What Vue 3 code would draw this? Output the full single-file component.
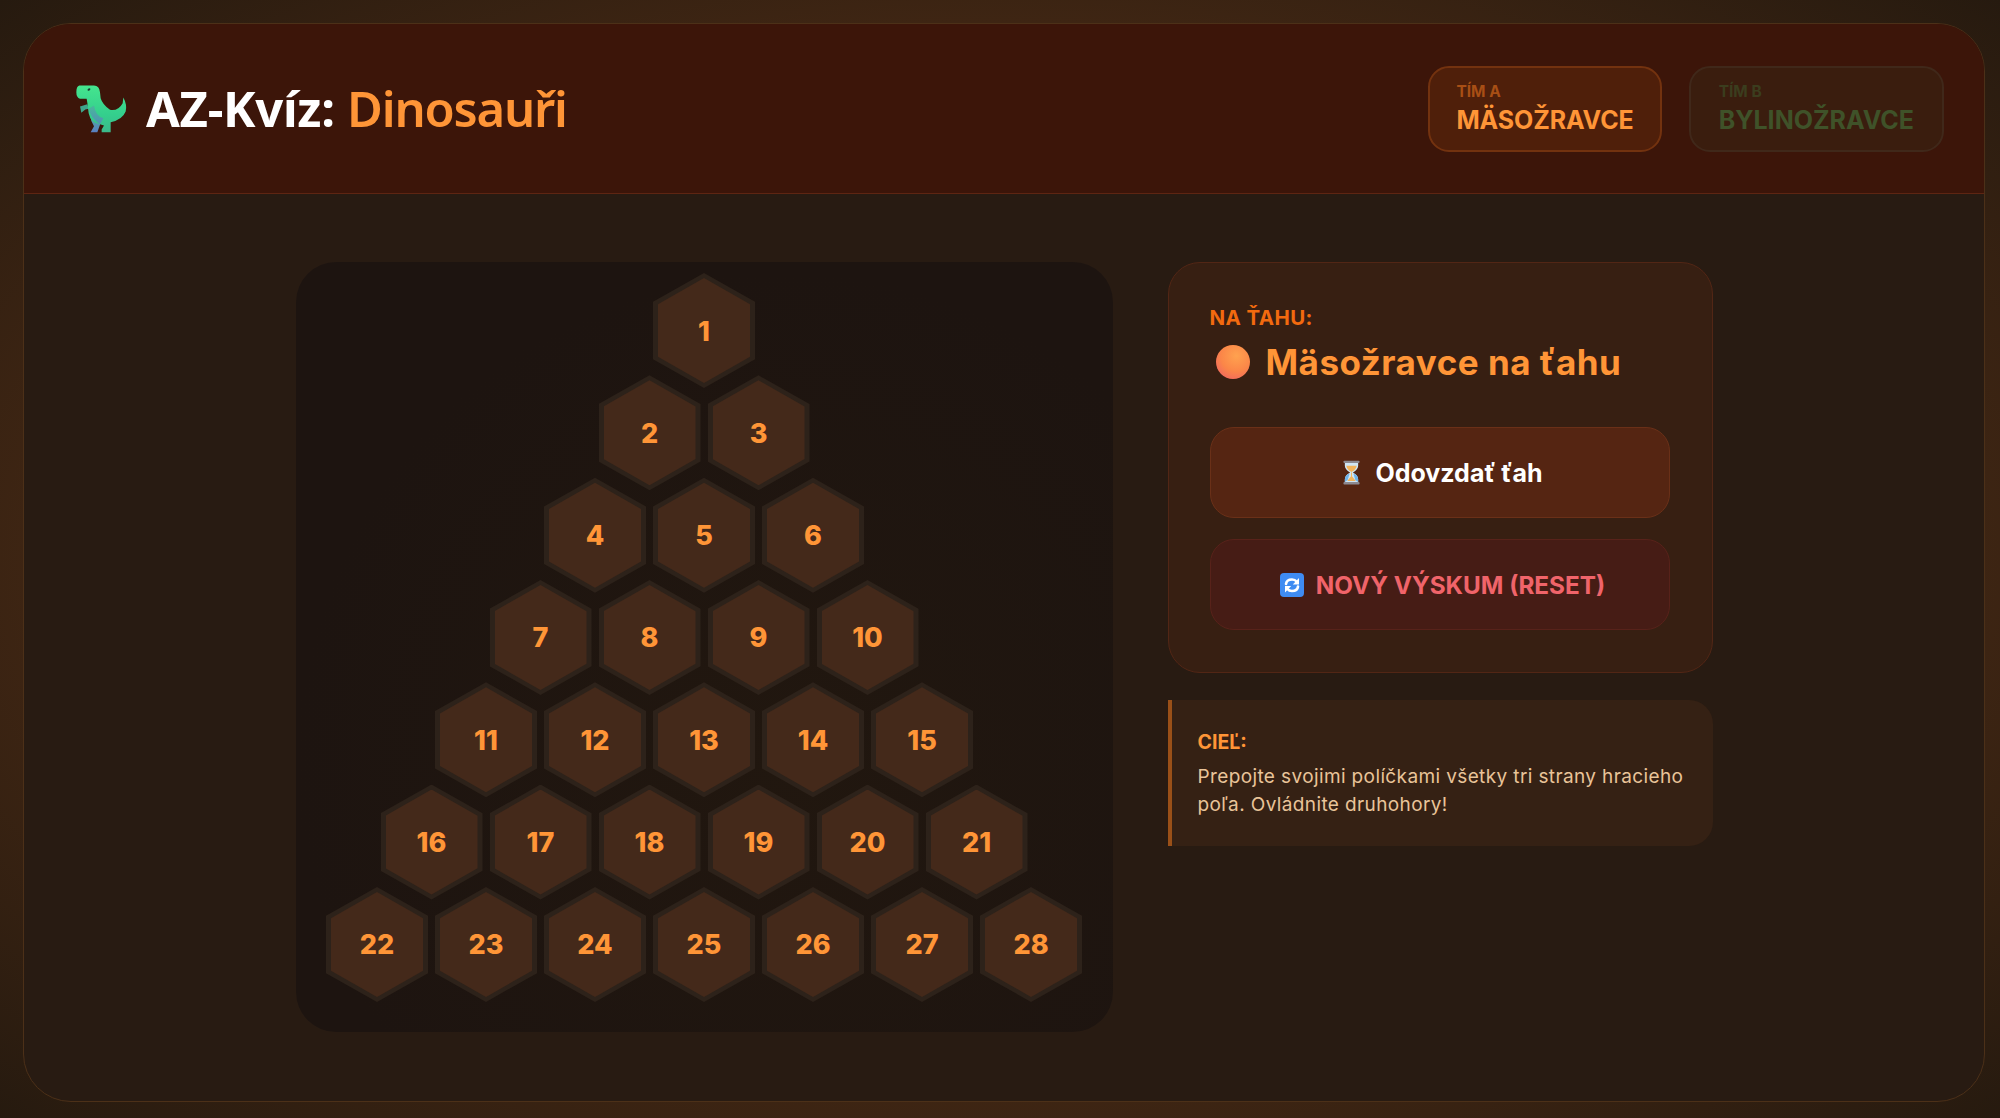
<script setup>
const rows = [[1],[2,3],[4,5,6],[7,8,9,10],[11,12,13,14,15],[16,17,18,19,20,21],[22,23,24,25,26,27,28]]
</script>

<template>
  <div class="page">
    <div class="frame">
      <header class="head">
        <div class="brand">
          <svg class="dino" viewBox="40 45 165 155" aria-hidden="true">
            <defs>
              <linearGradient id="dg" x1="0" y1="0" x2="0" y2="1">
                <stop offset="0" stop-color="#45e58e"/>
                <stop offset=".62" stop-color="#34cf8d"/>
                <stop offset="1" stop-color="#3bb98a"/>
              </linearGradient>
              <linearGradient id="db" x1="0" y1="0" x2="0" y2="1">
                <stop offset="0" stop-color="#4fae9e"/>
                <stop offset="1" stop-color="#5a7fc2"/>
              </linearGradient>
            </defs>
            <path fill="url(#db)" d="M88 140 L122 150 L118 170 L110 192 H90 L100 174 Q90 160 88 140Z"/>
            <path fill="#3fa58c" d="M58 115 L80 108 L84 122 L74 124 L62 134Z"/>
            <path fill="url(#dg)" d="M56 52 H100 Q116 52 118 72 L120 90 Q125 108 148 125 Q172 130 186 105 L188 88 Q200 110 195 130 Q185 155 150 162 L150 192 H123 V184 L130 172 L118 168 Q90 165 84 135 L80 104 L78 92 H58 Q47 88 47 72 Q47 54 56 52Z"/>
            <path fill="url(#db)" opacity=".75" d="M84 122 Q90 150 118 168 L128 150 Q105 145 100 112Z"/>
            <ellipse cx="85" cy="64" rx="4.5" ry="3" fill="#1e3d33" transform="rotate(-25 85 64)"/>
          </svg>
          <h1 class="title">AZ-Kvíz: <span class="accent">Dinosauři</span></h1>
        </div>
        <div class="teams">
          <div class="chip chip-a">
            <div class="chip-label">TÍM A</div>
            <div class="chip-name">MÄSOŽRAVCE</div>
          </div>
          <div class="chip chip-b">
            <div class="chip-label">TÍM B</div>
            <div class="chip-name">BYLINOŽRAVCE</div>
          </div>
        </div>
      </header>

      <main class="main">
        <section class="board">
          <div v-for="(row, i) in rows" :key="i" class="row">
            <div v-for="n in row" :key="n" class="hex">
              <div class="hex-in">{{ n }}</div>
            </div>
          </div>
        </section>

        <aside class="side">
          <div class="card">
            <div class="turn-label">NA ŤAHU:</div>
            <div class="turn">
              <span class="dot"></span>
              <span class="turn-text">Mäsožravce na ťahu</span>
            </div>
            <button class="btn btn-pass">
              <svg class="ico-glass" viewBox="0 0 20 26" aria-hidden="true">
                <path fill="#cfe6f5" d="M3 3 H17 V6 Q17 10 11.5 13 Q17 16 17 20 V23 H3 V20 Q3 16 8.500 13 Q3 10 3 6Z"/>
                <path fill="#f2b45c" d="M4.500 6 H15.500 Q15 10 10 12.500 Q5 10 4.500 6Z"/>
                <path fill="#f2b45c" d="M9.500 13 H10.500 V17 L14.500 22 H5.500 L9.500 17Z"/>
                <path fill="#6fb4ea" d="M3 20 Q3 16 8 14 L6 21 L3 23Z M17 20 Q17 16 12 14 L14 21 L17 23Z"/>
                <rect x="1.500" y="0.500" width="17" height="2.500" rx="1" fill="#8d8a90"/>
                <rect x="1.500" y="23" width="17" height="2.500" rx="1" fill="#8d8a90"/>
              </svg>
              <span>Odovzdať ťah</span>
            </button>
            <button class="btn btn-reset">
              <svg class="ico-sync" viewBox="0 0 24 24" aria-hidden="true">
                <rect width="24" height="24" rx="4" fill="#3f8cf2"/>
                <path fill="none" stroke="#fff" stroke-width="2.600" stroke-linecap="round" d="M6 11 Q6.500 6.500 12 6.500 Q15 6.500 16.500 8.500"/>
                <path fill="#fff" d="M19 5 V11.500 H12.800Z"/>
                <path fill="none" stroke="#fff" stroke-width="2.600" stroke-linecap="round" d="M18 13.500 Q17.500 18 12 18 Q9 18 7.500 16"/>
                <path fill="#fff" d="M5 19.500 V13 H11.200Z"/>
              </svg>
              <span>NOVÝ VÝSKUM (RESET)</span>
            </button>
          </div>
          <div class="goal">
            <div class="goal-title">CIEĽ:</div>
            <p class="goal-text">Prepojte svojimi políčkami všetky tri strany hracieho poľa. Ovládnite druhohory!</p>
          </div>
        </aside>
      </main>
    </div>
  </div>
</template>

<style>
html, body { margin: 0; background: #2a1b10; }
</style>

<style scoped>
.page {
  box-sizing: border-box;
  width: 2000px;
  height: 1118px;
  padding: 23px 15px 16px 23px;
  background: radial-gradient(ellipse at 50% 50%, #3e2513 68%, #261a0f 100%);
  font-family: Inter, "Noto Sans", sans-serif;
  overflow: hidden;
}
.frame {
  box-sizing: border-box;
  height: 100%;
  border: 1px solid #4c3018;
  border-radius: 48px;
  background: #281b12;
  overflow: hidden;
  display: flex;
  flex-direction: column;
}
.head {
  box-sizing: border-box;
  height: 170px;
  flex: none;
  background: #3c1509;
  border-bottom: 1px solid #5e2512;
  display: flex;
  align-items: center;
  justify-content: space-between;
  padding: 0 40px 0 50px;
}
.brand { display: flex; align-items: center; gap: 17px; }
.dino { width: 55px; height: 52px; flex: none; }
.title {
  margin: 0 0 2px;
  font-family: "Noto Sans", sans-serif;
  font-weight: 700;
  font-size: 49px;
  letter-spacing: -0.3px;
  color: #fff;
  white-space: pre;
}
.accent { color: #ff9537; font-weight: 600; letter-spacing: -1.2px; }
.teams { display: flex; gap: 27px; }
.chip {
  box-sizing: border-box;
  height: 86px;
  border-radius: 21px;
  padding: 14px 28px 0;
  border: 2px solid;
}
.chip-a { background: #4f1f0a; border-color: #73320f; color: #ff9537; padding: 14px 26px 0; }
.chip-a .chip-name { letter-spacing: -.1px; }
.chip-b { background: #3a1d0e; border-color: #40281a; color: #3f5229; }
.chip-label { font-size: 15.500px; font-weight: 700; line-height: 20px; }
.chip-a .chip-label { color: #a84f15; }
.chip-b .chip-label { color: #3b3d1e; }
.chip-name { font-size: 25px; font-weight: 700; line-height: 36px; white-space: nowrap; }
.main {
  flex: 1;
  display: flex;
  align-items: flex-start;
  justify-content: center;
  gap: 55px;
  padding-top: 68px;
}
.board {
  box-sizing: border-box;
  width: 817px;
  height: 770px;
  padding: 11px 30px 31px;
  border-radius: 40px;
  background: radial-gradient(circle at 60% 65%, #21170f 0, #1d1410 70%);
  display: flex;
  flex-direction: column;
  align-items: center;
}
.row { display: flex; gap: 7px; justify-content: center; }
.row + .row { margin-top: -12.700px; }
.hex {
  width: 102px;
  height: 115px;
  padding: 5px;
  box-sizing: border-box;
  background: #2d221a;
  clip-path: polygon(50% 0, 100% 25%, 100% 75%, 50% 100%, 0 75%, 0 25%);
  display: flex;
}
.hex-in {
  flex: 1;
  background: #44291a;
  clip-path: polygon(50% 0, 100% 25%, 100% 75%, 50% 100%, 0 75%, 0 25%);
  display: flex;
  align-items: center;
  justify-content: center;
  padding-top: 1px;
  color: #ff9537;
  font-size: 27px;
  font-weight: 800;
}
.side { width: 545px; display: flex; flex-direction: column; gap: 27px; }
.card {
  box-sizing: border-box;
  height: 411px;
  padding: 43px 41px;
  border: 1px solid #522615;
  border-radius: 32px;
  background: #371f12;
}
.turn-label { font-size: 20.500px; font-weight: 700; line-height: 24px; color: #f26a0f; letter-spacing: .4px; }
.turn { display: flex; align-items: center; gap: 16px; margin: 8px 0 0 6px; height: 48px; }
.dot {
  width: 34px;
  height: 34px;
  border-radius: 50%;
  flex: none;
  background: radial-gradient(circle at 60% 32%, #ffa24f 0%, #fb8648 50%, #ec5a6a 100%);
}
.turn-text { font-size: 35px; font-weight: 700; letter-spacing: .5px; color: #ff9537; white-space: nowrap; }
.btn {
  box-sizing: border-box;
  display: flex;
  align-items: center;
  justify-content: center;
  width: 460px;
  height: 91px;
  border-radius: 24px;
  font-family: inherit;
  font-weight: 700;
  padding: 0 0 0 6px;
}
.btn-pass { margin-top: 41px; gap: 14px; font-size: 25px; background: #552512; border: 1px solid #6a3018; color: #fff; }
.btn-reset { margin-top: 21px; gap: 12px; font-size: 24.300px; background: #461c15; border: 1px solid #58221a; color: #f0646a; }
.ico-glass { width: 19px; height: 25px; flex: none; }
.ico-sync { width: 24px; height: 24px; flex: none; }
.goal {
  box-sizing: border-box;
  height: 146px;
  padding: 31px 26px 0;
  border-left: 4px solid #9a5018;
  border-radius: 0 24px 24px 0;
  background: #352114;
}
.goal-title { font-size: 19.500px; font-weight: 700; line-height: 22px; color: #ff9537; }
.goal-text { margin: 10px 0 0; font-size: 19px; letter-spacing: .38px; line-height: 28px; color: #e9c499; font-weight: 400; }
</style>
